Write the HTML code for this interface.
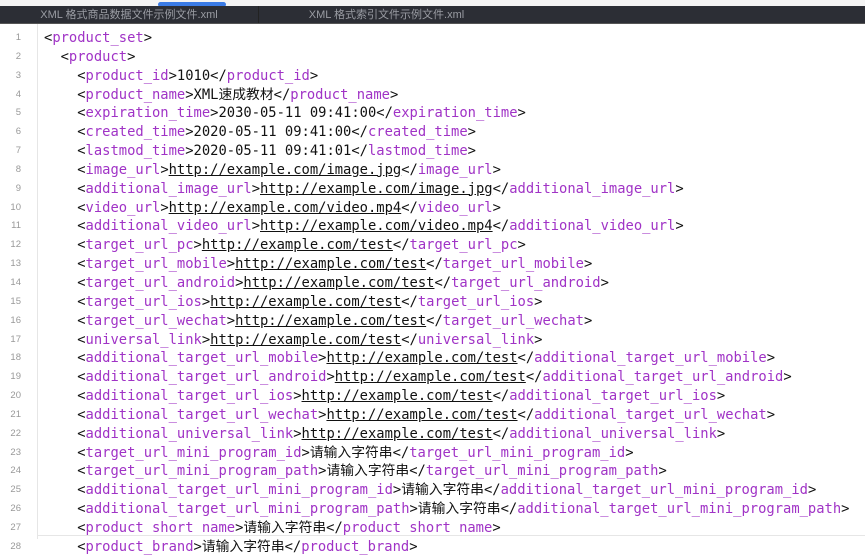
<!DOCTYPE html>
<html><head><meta charset="utf-8"><style>
html,body{margin:0;padding:0;width:865px;height:539px;overflow:hidden;background:#fff}
.top{position:absolute;left:0;top:0;width:865px;height:6px;background:#f4f4f4}
.blue{position:absolute;left:158px;top:2px;width:68px;height:5px;background:#3a7be6;border-radius:3px}
.bar{position:absolute;left:0;top:6px;width:865px;height:17px;background:#2c2e35;border-bottom:1px solid #555}
.tab{position:absolute;top:0;height:17px;line-height:15px;font:11px "Liberation Sans","Noto Sans CJK SC",sans-serif;color:#9a9ca3;text-align:center}
.sep{position:absolute;left:258px;top:0;width:1px;height:17px;background:#222}
.gut{position:absolute;left:37px;top:24px;width:1px;height:515px;background:#e6e6e6}
.code{position:absolute;left:0;top:29px;width:865px}
.l{position:relative;height:18.85px;line-height:18.85px;white-space:pre;font-family:"DejaVu Sans Mono","Noto Sans CJK SC",monospace;font-size:13.8px;color:#111}
.n{position:absolute;left:0;width:21px;text-align:right;font:9.5px "Liberation Sans",sans-serif;color:#999;top:0;line-height:18.85px}
.c{position:absolute;left:44px;top:0}
.t{color:#a033c6}
u{text-decoration:underline}
.hl{position:absolute;left:38px;top:535px;width:827px;height:1px;background:#e6e6e6}
</style></head><body>
<div class="top"></div><div class="blue"></div>
<div class="bar"><div class="tab" style="left:0;width:258px">XML 格式商品数据文件示例文件.xml</div><div class="sep"></div><div class="tab" style="left:259px;width:255px">XML 格式索引文件示例文件.xml</div></div>
<div class="gut"></div>
<div class="code">
<div class="l"><span class="n">1</span><span class="c">&lt;<span class="t">product_set</span>&gt;</span></div>
<div class="l"><span class="n">2</span><span class="c">  &lt;<span class="t">product</span>&gt;</span></div>
<div class="l"><span class="n">3</span><span class="c">    &lt;<span class="t">product_id</span>&gt;1010&lt;/<span class="t">product_id</span>&gt;</span></div>
<div class="l"><span class="n">4</span><span class="c">    &lt;<span class="t">product_name</span>&gt;XML速成教材&lt;/<span class="t">product_name</span>&gt;</span></div>
<div class="l"><span class="n">5</span><span class="c">    &lt;<span class="t">expiration_time</span>&gt;2030-05-11 09:41:00&lt;/<span class="t">expiration_time</span>&gt;</span></div>
<div class="l"><span class="n">6</span><span class="c">    &lt;<span class="t">created_time</span>&gt;2020-05-11 09:41:00&lt;/<span class="t">created_time</span>&gt;</span></div>
<div class="l"><span class="n">7</span><span class="c">    &lt;<span class="t">lastmod_time</span>&gt;2020-05-11 09:41:01&lt;/<span class="t">lastmod_time</span>&gt;</span></div>
<div class="l"><span class="n">8</span><span class="c">    &lt;<span class="t">image_url</span>&gt;<u>http://example.com/image.jpg</u>&lt;/<span class="t">image_url</span>&gt;</span></div>
<div class="l"><span class="n">9</span><span class="c">    &lt;<span class="t">additional_image_url</span>&gt;<u>http://example.com/image.jpg</u>&lt;/<span class="t">additional_image_url</span>&gt;</span></div>
<div class="l"><span class="n">10</span><span class="c">    &lt;<span class="t">video_url</span>&gt;<u>http://example.com/video.mp4</u>&lt;/<span class="t">video_url</span>&gt;</span></div>
<div class="l"><span class="n">11</span><span class="c">    &lt;<span class="t">additional_video_url</span>&gt;<u>http://example.com/video.mp4</u>&lt;/<span class="t">additional_video_url</span>&gt;</span></div>
<div class="l"><span class="n">12</span><span class="c">    &lt;<span class="t">target_url_pc</span>&gt;<u>http://example.com/test</u>&lt;/<span class="t">target_url_pc</span>&gt;</span></div>
<div class="l"><span class="n">13</span><span class="c">    &lt;<span class="t">target_url_mobile</span>&gt;<u>http://example.com/test</u>&lt;/<span class="t">target_url_mobile</span>&gt;</span></div>
<div class="l"><span class="n">14</span><span class="c">    &lt;<span class="t">target_url_android</span>&gt;<u>http://example.com/test</u>&lt;/<span class="t">target_url_android</span>&gt;</span></div>
<div class="l"><span class="n">15</span><span class="c">    &lt;<span class="t">target_url_ios</span>&gt;<u>http://example.com/test</u>&lt;/<span class="t">target_url_ios</span>&gt;</span></div>
<div class="l"><span class="n">16</span><span class="c">    &lt;<span class="t">target_url_wechat</span>&gt;<u>http://example.com/test</u>&lt;/<span class="t">target_url_wechat</span>&gt;</span></div>
<div class="l"><span class="n">17</span><span class="c">    &lt;<span class="t">universal_link</span>&gt;<u>http://example.com/test</u>&lt;/<span class="t">universal_link</span>&gt;</span></div>
<div class="l"><span class="n">18</span><span class="c">    &lt;<span class="t">additional_target_url_mobile</span>&gt;<u>http://example.com/test</u>&lt;/<span class="t">additional_target_url_mobile</span>&gt;</span></div>
<div class="l"><span class="n">19</span><span class="c">    &lt;<span class="t">additional_target_url_android</span>&gt;<u>http://example.com/test</u>&lt;/<span class="t">additional_target_url_android</span>&gt;</span></div>
<div class="l"><span class="n">20</span><span class="c">    &lt;<span class="t">additional_target_url_ios</span>&gt;<u>http://example.com/test</u>&lt;/<span class="t">additional_target_url_ios</span>&gt;</span></div>
<div class="l"><span class="n">21</span><span class="c">    &lt;<span class="t">additional_target_url_wechat</span>&gt;<u>http://example.com/test</u>&lt;/<span class="t">additional_target_url_wechat</span>&gt;</span></div>
<div class="l"><span class="n">22</span><span class="c">    &lt;<span class="t">additional_universal_link</span>&gt;<u>http://example.com/test</u>&lt;/<span class="t">additional_universal_link</span>&gt;</span></div>
<div class="l"><span class="n">23</span><span class="c">    &lt;<span class="t">target_url_mini_program_id</span>&gt;请输入字符串&lt;/<span class="t">target_url_mini_program_id</span>&gt;</span></div>
<div class="l"><span class="n">24</span><span class="c">    &lt;<span class="t">target_url_mini_program_path</span>&gt;请输入字符串&lt;/<span class="t">target_url_mini_program_path</span>&gt;</span></div>
<div class="l"><span class="n">25</span><span class="c">    &lt;<span class="t">additional_target_url_mini_program_id</span>&gt;请输入字符串&lt;/<span class="t">additional_target_url_mini_program_id</span>&gt;</span></div>
<div class="l"><span class="n">26</span><span class="c">    &lt;<span class="t">additional_target_url_mini_program_path</span>&gt;请输入字符串&lt;/<span class="t">additional_target_url_mini_program_path</span>&gt;</span></div>
<div class="l"><span class="n">27</span><span class="c">    &lt;<span class="t">product_short_name</span>&gt;请输入字符串&lt;/<span class="t">product_short_name</span>&gt;</span></div>
<div class="l"><span class="n">28</span><span class="c">    &lt;<span class="t">product_brand</span>&gt;请输入字符串&lt;/<span class="t">product_brand</span>&gt;</span></div>
</div>
<div class="hl"></div>
</body></html>
